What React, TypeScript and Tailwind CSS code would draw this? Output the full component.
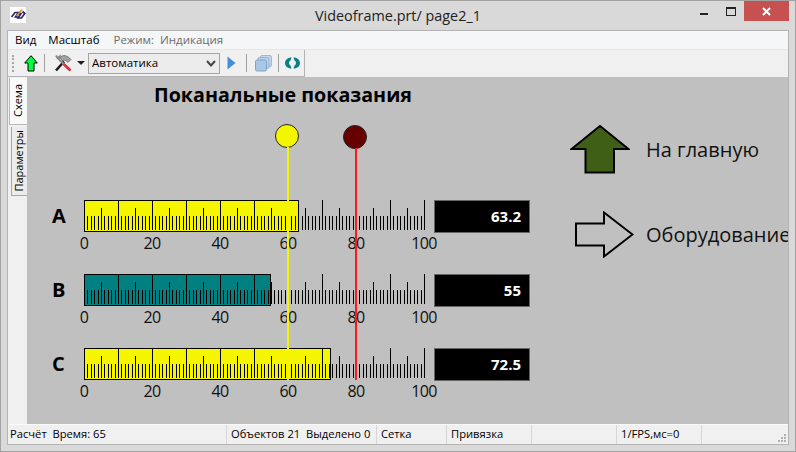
const ui = { fontFamily: '"Open Sans", "Noto Sans", sans-serif' }

const channels = [
  { name: 'A', value: 63.2, label: '63.2', fill: 'bg-[#f5f500]' },
  { name: 'B', value: 55, label: '55', fill: 'bg-[#008080]' },
  { name: 'C', value: 72.5, label: '72.5', fill: 'bg-[#f5f500]' },
]

const statusCells = [
  { text: 'Расчёт  Время: 65', width: 'w-[219px]', pad: 'pl-[2px]' },
  { text: 'Объектов 21  Выделено 0', width: 'w-[150px]', pad: 'pl-[4px]' },
  { text: 'Сетка', width: 'w-[70px]', pad: 'pl-[4px]' },
  { text: 'Привязка', width: 'w-[85px]', pad: 'pl-[4px]' },
  { text: '', width: 'w-[85px]', pad: 'pl-[4px]' },
  { text: '1/FPS,мс=0', width: 'w-[85px]', pad: 'pl-[4px]' },
]

function Ticks() {
  const ticks = Array.from({ length: 101 }, (_, i) => i)
  return (
    <svg width="342" height="32" className="absolute left-0 top-0" shapeRendering="crispEdges">
      {ticks.map(i => {
        const x = Math.round(i * 3.4) + 0.5
        const top = i % 10 === 0 ? 0 : i % 5 === 0 ? 8 : 16
        return <line key={i} x1={x} x2={x} y1={top} y2={30} stroke="#000" strokeWidth="1" />
      })}
    </svg>
  )
}

function Gauge({ name, value, label, fill }: { name: string; value: number; label: string; fill: string }) {
  return (
    <div className="flex h-[74px] items-start">
      <div className="w-[32px] text-[20px] font-bold leading-[32px] text-black">{name}</div>
      <div className="w-[350px]">
        <div className="relative h-[32px] w-[340px]">
          <div
            className={`absolute left-0 top-0 h-[32px] border border-black ${fill}`}
            style={{ width: Math.ceil(value * 3.4) }}
          />
          <Ticks />
        </div>
        <div className="mt-px flex w-[340px] justify-between text-[16px] leading-[20px] tracking-[-0.6px] text-[#111]">
          {[0, 20, 40, 60, 80, 100].map(n => (
            <div key={n} className="flex w-0 justify-center">{n}</div>
          ))}
        </div>
      </div>
      <div className="flex h-[33px] w-[96px] items-center justify-end border border-[#666] bg-black pr-[8px] text-[15px] font-bold text-white">
        {label}
      </div>
    </div>
  )
}

function AppIcon() {
  return (
    <div className="flex h-[16px] w-[16px] items-center justify-center bg-white">
      <svg width="16" height="16" viewBox="0 0 16 16" fill="none">
        <path d="M1.5 10 L5 5.5 H8.5 L5.5 10 H8" stroke="#26266e" strokeWidth="1.7" />
        <path d="M7.5 6.5 H11 L8 11 H11.5 L14.8 6.5 L12.5 4.5" stroke="#26266e" strokeWidth="1.7" />
        <path d="M6.5 9 L12 2.5" stroke="#e08a20" strokeWidth="1.5" />
      </svg>
    </div>
  )
}

function GreenArrow() {
  return (
    <svg width="14" height="17" viewBox="0 0 14 17">
      <path d="M7 0.7 L13.3 8 H10 V16 H4 V8 H0.7 Z" fill="#00ff40" stroke="#000" strokeWidth="1" />
    </svg>
  )
}

function ToolsIcon() {
  return (
    <svg width="18" height="18" viewBox="0 0 18 18">
      <path d="M2 16.5 L10 7.5" stroke="#1c1c1c" strokeWidth="2.6" />
      <path d="M8.5 9 L16.5 16.5" stroke="#d8303a" strokeWidth="2.8" />
      <path d="M2 1.5 L3.5 4 L5.5 2.5 L5 5.5 L9.5 10" stroke="#8a8a8a" strokeWidth="2" fill="none" />
      <path d="M6 3.5 C 9 0.5 13 1 17 5.5 L14 8.5 L11 6 L8.5 7 Z" fill="#a2a2a2" stroke="#5e5e5e" strokeWidth="0.7" />
    </svg>
  )
}

function LayersIcon() {
  return (
    <svg width="17" height="17" viewBox="0 0 17 17">
      <rect x="5.5" y="0.5" width="11" height="11" rx="1.5" fill="#c5d8ec" stroke="#9db9d6" />
      <rect x="3" y="2.5" width="11" height="11" rx="1.5" fill="#bcd2e9" stroke="#93b2d2" />
      <rect x="0.5" y="5" width="11" height="11" rx="1.5" fill="#a9c6e4" stroke="#7fa4cc" />
    </svg>
  )
}

function SyncIcon() {
  return (
    <svg width="15" height="12" viewBox="0 0 15 12">
      <path d="M6.5 0.5 L5.5 3.5 C 4.5 4 4 5 4 6 C 4 7 4.5 8 5.5 8.5 L6.5 11.5 C 2.5 11.5 0 9 0 6 C 0 3 2.5 0.5 6.5 0.5 Z" fill="#0c7f86" />
      <path d="M8.5 0.5 L9.5 3.5 C 10.5 4 11 5 11 6 C 11 7 10.5 8 9.5 8.5 L8.5 11.5 C 12.5 11.5 15 9 15 6 C 15 3 12.5 0.5 8.5 0.5 Z" fill="#0c7f86" />
    </svg>
  )
}

function Separator({ className }: { className: string }) {
  return <div className={`h-[18px] w-px bg-[#a0a0a0] ${className}`} />
}

function Toolbar() {
  return (
    <div className="flex h-[27px] bg-[#f0f0f0]">
      <div className="flex w-[297px] items-center border-b border-r border-[#b4b4b4] pl-[4px]">
        <div className="h-[17px] w-[3px] border-l-2 border-dotted border-[#a8a8a8]" />
        <div className="ml-[9px]"><GreenArrow /></div>
        <Separator className="ml-[6px]" />
        <div className="ml-[9px]"><ToolsIcon /></div>
        <div className="ml-[5px] h-0 w-0 border-x-[4px] border-t-[4px] border-x-transparent border-t-[#222]" />
        <div className="ml-[3px] flex h-[21px] w-[132px] items-center justify-between border border-[#a5a5a5] bg-[#ececec] pl-[3px] pr-[3px] text-[11.5px] text-black">
          <span>Автоматика</span>
          <svg width="10" height="7" viewBox="0 0 10 7" fill="none">
            <path d="M1 1 L5 5.5 L9 1" stroke="#444" strokeWidth="2" />
          </svg>
        </div>
        <svg width="9" height="14" viewBox="0 0 9 14" className="ml-[7px]">
          <path d="M0.5 0.5 L8.5 7 L0.5 13.5 Z" fill="#3f8fdc" />
        </svg>
        <Separator className="ml-[10px]" />
        <div className="ml-[8px]"><LayersIcon /></div>
        <Separator className="ml-[6px]" />
        <div className="ml-[6px]"><SyncIcon /></div>
      </div>
      <div className="flex-1" />
    </div>
  )
}

function SideTabs() {
  return (
    <div className="flex w-[19px] shrink-0 flex-col items-end bg-[#f0f0f0] pt-px text-[11px] text-black">
      <div className="flex h-[47px] w-[18px] items-center justify-center border-b border-l border-[#b8b8b8] bg-[#fafafa]">
        <span className="rotate-180 [writing-mode:vertical-rl]">Схема</span>
      </div>
      <div className="mt-[2px] flex h-[69px] w-[16px] items-center justify-center border-b border-l border-[#a8a8a8] bg-[#ececec]">
        <span className="rotate-180 [writing-mode:vertical-rl]">Параметры</span>
      </div>
    </div>
  )
}

function Canvas() {
  return (
    <div className="relative flex flex-1 overflow-hidden bg-[#c0c0c0]">
      <div className="w-[543px] shrink-0 pl-[25px] pt-[4px]">
        <div className="ml-[102px] text-[19.7px] font-bold leading-[28px] text-black">Поканальные показания</div>
        <div className="mt-[91px]">
          {channels.map(c => (
            <Gauge key={c.name} {...c} />
          ))}
        </div>
      </div>
      <div className="shrink-0 pt-[48px]">
        <div className="flex items-center gap-[16px]">
          <svg width="60" height="49" viewBox="0 0 60 49">
            <path d="M30 1 L58.5 24 H44 V47.5 H15.5 V24 H1.5 Z" fill="#3f5f17" stroke="#000" strokeWidth="2" />
          </svg>
          <span className="whitespace-nowrap text-[20px] text-[#111]">На главную</span>
        </div>
        <div className="ml-[4px] mt-[37px] flex items-center gap-[12px]">
          <svg width="60" height="47" viewBox="0 0 60 47">
            <path d="M2 12.5 H30 V1.5 L58.5 23.5 L30 45.5 V34.5 H2 Z" fill="none" stroke="#000" strokeWidth="2" />
          </svg>
          <span className="whitespace-nowrap text-[20px] text-[#111]">Оборудование</span>
        </div>
      </div>
      {/* cursors lie over the gauges */}
      <div className="absolute left-[248px] top-[47px] h-[24px] w-[24px] rounded-full border border-[#222] bg-[#f5f500]" />
      <div className="absolute left-[260px] top-[70px] h-[233px] w-[2px] bg-[#f5f500]" />
      <div className="absolute left-[316px] top-[48px] h-[24px] w-[24px] rounded-full border border-[#222] bg-[#660000]" />
      <div className="absolute left-[328px] top-[71px] h-[232px] w-[2px] bg-[#ff1a1a]" />
    </div>
  )
}

function StatusBar() {
  return (
    <div className="flex h-[20px] shrink-0 border-t border-[#fafafa] bg-[#f0f0f0] text-[11.2px] text-black">
      {statusCells.map((cell, i) => (
        <div key={i} className={`flex items-center whitespace-pre border-r border-[#d6d6d6] ${cell.width} ${cell.pad}`}>
          {cell.text}
        </div>
      ))}
      <div className="flex flex-1 items-end justify-end pb-px pr-px">
        <svg width="9" height="9" viewBox="0 0 9 9" fill="#b0b0b0">
          <rect x="6" y="0" width="2" height="2" />
          <rect x="3" y="3" width="2" height="2" />
          <rect x="6" y="3" width="2" height="2" />
          <rect x="0" y="6" width="2" height="2" />
          <rect x="3" y="6" width="2" height="2" />
          <rect x="6" y="6" width="2" height="2" />
        </svg>
      </div>
    </div>
  )
}

export default function App() {
  return (
    <div style={ui} className="flex h-[452px] w-[796px] flex-col overflow-hidden border border-[#a3a3a3] bg-[#d9d9d9]">
      <div className="grid h-[29px] shrink-0 grid-cols-[1fr_auto_1fr]">
        <div className="pl-[9px] pt-[6px]"><AppIcon /></div>
        <div className="pt-[4px] text-[14.4px] leading-[22px] text-[#222]">Videoframe.prt/ page2_1</div>
        <div className="flex items-start justify-end pr-[6px]">
          <div className="mr-[18px] mt-[12px] h-[2px] w-[8px] bg-[#222]" />
          <div className="mr-[8px] mt-[6px] h-[9px] w-[10px] border border-t-2 border-[#222]" />
          <div className="flex h-[20px] w-[45px] items-center justify-center bg-[#c75050]">
            <svg width="9" height="9" viewBox="0 0 9 9">
              <path d="M1 1 L8 8 M8 1 L1 8" stroke="#fff" strokeWidth="2" />
            </svg>
          </div>
        </div>
      </div>
      <div className="mx-[6px] mb-[6px] flex min-h-0 flex-1 flex-col border border-[#b4b4b4]">
        <div className="flex h-[19px] shrink-0 items-center border-b border-[#e6e6e6] bg-[#f5f6f8] pl-[7px] text-[11.5px] text-black">
          <span>Вид</span>
          <span className="ml-[12px]">Масштаб</span>
          <span className="ml-[14px] text-[#6d6d6d]">Режим:</span>
          <span className="ml-[6px] text-[#6d6d6d]">Индикация</span>
        </div>
        <Toolbar />
        <div className="flex min-h-0 flex-1">
          <SideTabs />
          <Canvas />
        </div>
        <StatusBar />
      </div>
    </div>
  )
}
